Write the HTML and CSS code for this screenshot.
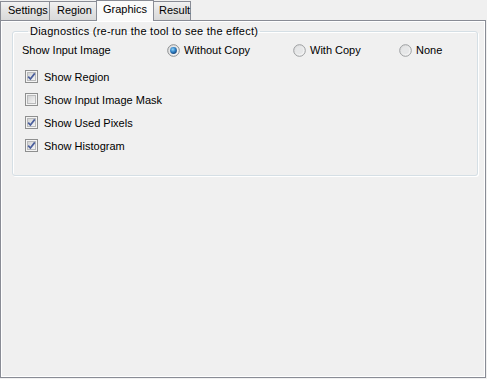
FILE: index.html
```html
<!DOCTYPE html>
<html lang="en">
<head>
    <meta charset="UTF-8">
    <title>Graphics</title>
    <link rel="stylesheet" href="styles.css">
</head>
<body>

<div class="tabs">
    <div class="tab tab-settings">Settings</div>
    <div class="tab tab-region">Region</div>
    <div class="tab tab-graphics active">Graphics</div>
    <div class="tab tab-result">Result</div>
</div>

<div class="tab-page">
    <fieldset class="group">
        <legend>Diagnostics (re-run the tool to see the effect)</legend>

        <div class="input-row">
            <span>Show Input Image</span>
            <label class="option">
                <svg class="radio" width="13" height="13" viewBox="0 0 13 13">
                    <defs>
                        <linearGradient id="rbg" x1="0" y1="0" x2="1" y2="1">
                            <stop offset="0" stop-color="#d9dadb"/>
                            <stop offset="1" stop-color="#fbfbfb"/>
                        </linearGradient>
                        <radialGradient id="rdot" cx="0.4" cy="0.35" r="0.7">
                            <stop offset="0" stop-color="#8fd4f8"/>
                            <stop offset="0.55" stop-color="#2d7ec3"/>
                            <stop offset="1" stop-color="#173f73"/>
                        </radialGradient>
                    </defs>
                    <circle cx="6.5" cy="6.5" r="5.8" fill="url(#rbg)" stroke="#8b8d8f"/>
                    <circle cx="6.5" cy="6.5" r="3.4" fill="url(#rdot)"/>
                </svg>
                Without Copy
            </label>
            <label class="option">
                <svg class="radio" width="13" height="13" viewBox="0 0 13 13">
                    <circle cx="6.5" cy="6.5" r="5.8" fill="url(#rbg)" stroke="#9c9ea0"/>
                    <circle cx="6.5" cy="6.5" r="3.6" fill="#e6e7e8"/>
                </svg>
                With Copy
            </label>
            <label class="option">
                <svg class="radio" width="13" height="13" viewBox="0 0 13 13">
                    <circle cx="6.5" cy="6.5" r="5.8" fill="url(#rbg)" stroke="#9c9ea0"/>
                    <circle cx="6.5" cy="6.5" r="3.6" fill="#e6e7e8"/>
                </svg>
                None
            </label>
        </div>

        <!-- checkbox list -->
        <div class="checks">
            <label class="check">
                <svg width="13" height="13" viewBox="0 0 13 13">
                    <defs>
                        <linearGradient id="cbg" x1="0" y1="0" x2="1" y2="1">
                            <stop offset="0" stop-color="#cfd0d1"/>
                            <stop offset="1" stop-color="#f7f7f7"/>
                        </linearGradient>
                    </defs>
                    <rect x="0.5" y="0.5" width="12" height="12" fill="#f4f4f4" stroke="#8e8f8f"/>
                    <rect x="2.5" y="2.5" width="8" height="8" fill="url(#cbg)" stroke="#b9babb"/>
                    <path d="M3.2 6.6 L5.4 9 L9.8 3.4" fill="none" stroke="#4a5e9c" stroke-width="1.7"/>
                </svg>
                Show Region
            </label>
            <label class="check">
                <svg width="13" height="13" viewBox="0 0 13 13">
                    <rect x="0.5" y="0.5" width="12" height="12" fill="#f4f4f4" stroke="#8e8f8f"/>
                    <rect x="2.5" y="2.5" width="8" height="8" fill="url(#cbg)" stroke="#b9babb"/>
                </svg>
                Show Input Image Mask
            </label>
            <label class="check">
                <svg width="13" height="13" viewBox="0 0 13 13">
                    <rect x="0.5" y="0.5" width="12" height="12" fill="#f4f4f4" stroke="#8e8f8f"/>
                    <rect x="2.5" y="2.5" width="8" height="8" fill="url(#cbg)" stroke="#b9babb"/>
                    <path d="M3.2 6.6 L5.4 9 L9.8 3.4" fill="none" stroke="#4a5e9c" stroke-width="1.7"/>
                </svg>
                Show Used Pixels
            </label>
            <label class="check">
                <svg width="13" height="13" viewBox="0 0 13 13">
                    <rect x="0.5" y="0.5" width="12" height="12" fill="#f4f4f4" stroke="#8e8f8f"/>
                    <rect x="2.5" y="2.5" width="8" height="8" fill="url(#cbg)" stroke="#b9babb"/>
                    <path d="M3.2 6.6 L5.4 9 L9.8 3.4" fill="none" stroke="#4a5e9c" stroke-width="1.7"/>
                </svg>
                Show Histogram
            </label>
        </div>
    </fieldset>
</div>

</body>
</html>
```

FILE: styles.css
```css
/* page */
body {
    margin: 0;
    width: 487px;
    height: 379px;
    background-color: #f0f0f0;
    font-family: "Liberation Sans", Arial, sans-serif;
    font-size: 11px;
    color: #000;
    overflow: hidden;
}

/* tab strip */
.tabs {
    display: flex;
    align-items: flex-end;
    height: 21px;
    position: relative;
    z-index: 1;
}
.tab {
    box-sizing: border-box;
    height: 19px;
    padding-top: 2px;
    padding-left: 7px;
    border: 1px solid #898c95;
    border-bottom: none;
    margin-bottom: 1px;
    margin-right: -1px;
    background: linear-gradient(#f2f2f2, #e3e3e3 50%, #d9d9d9);
    line-height: 13px;
}
.tab-settings { width: 50px; }
.tab-region   { width: 50px; }
.tab-graphics { width: 58px; }
.tab-result   { width: 38px; padding-left: 5px; }
.tab.active {
    height: 21px;
    margin-bottom: 0;
    margin-left: -2px;
    margin-right: -1px;
    padding-top: 2px;
    padding-left: 6px;
    background: #fafafa;
    position: relative;
    z-index: 2;
}

/* tab page */
.tab-page {
    box-sizing: border-box;
    width: 486px;
    height: 358px;
    margin-top: -1px;
    border: 1px solid #898c95;
    box-shadow: inset 1px 1px 0 #fff, inset -1px -1px 0 #fff;
    padding: 4px 0 0 11px;
}

/* group box */
.group {
    box-sizing: border-box;
    width: 466px;
    margin: 0;
    padding: 6px 0 18px 9px;
    border: 1px solid #d5dfe5;
    border-radius: 3px;
    box-shadow: inset 1px 1px 0 #fff, 1px 1px 0 #fff;
}
.group legend {
    margin-left: 6px;
    padding: 0 2px;
    line-height: 13px;
    letter-spacing: 0.24px;
}

.input-row {
    display: grid;
    grid-template-columns: 145px 126px 106px auto;
    align-items: center;
    height: 13px;
    line-height: 13px;
}
.option {
    display: flex;
    align-items: center;
    gap: 4px;
}

.checks {
    margin-top: 8px;
    padding-left: 3px;
}
.check {
    display: flex;
    align-items: center;
    gap: 6px;
    height: 23px;
}
svg {
    display: block;
    flex: none;
}
```
